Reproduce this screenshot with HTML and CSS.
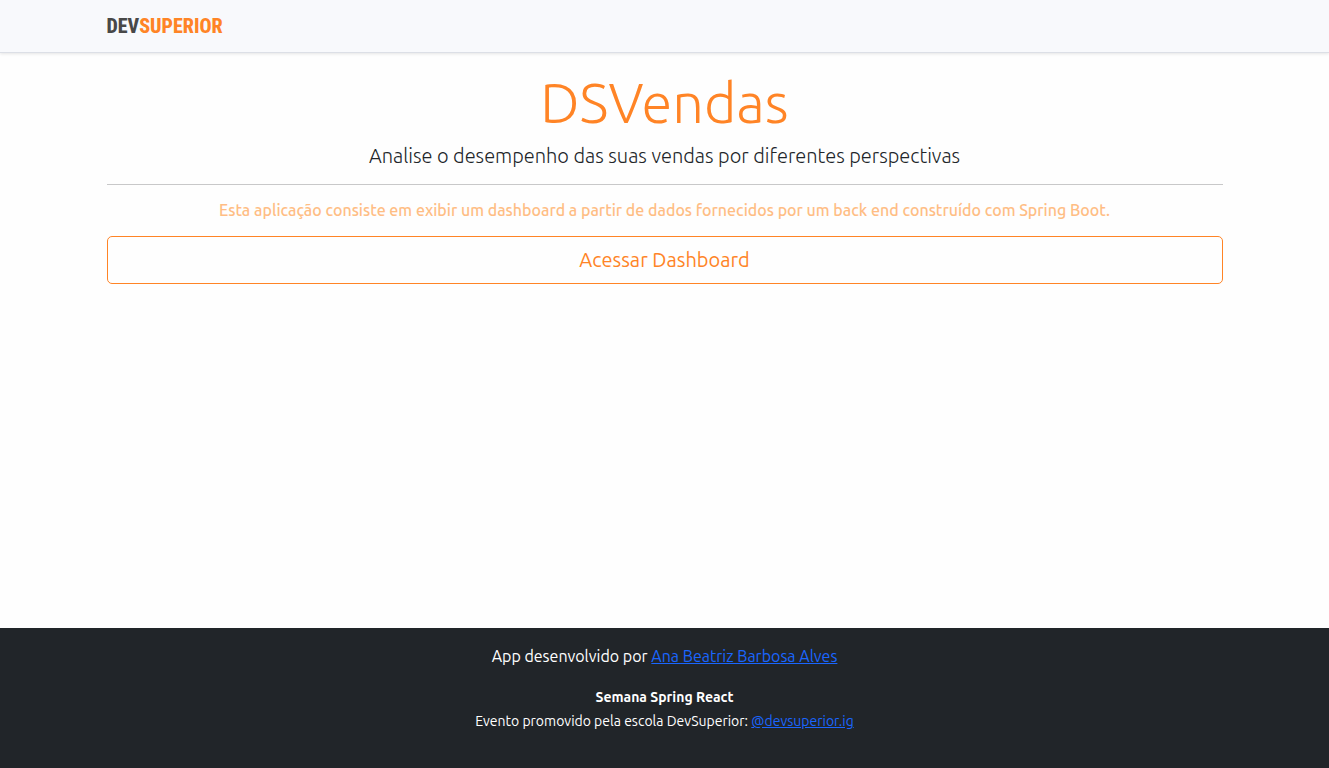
FILE: index.html
```html
<!DOCTYPE html>
<html lang="pt-BR">
<head>
  <meta charset="utf-8">
  <meta name="viewport" content="width=device-width, initial-scale=1">
  <title>DSVendas</title>
  <link rel="stylesheet" href="styles.css">
</head>
<body>
  <header class="navbar">
    <nav class="container">
      <span class="logo">DEV<span class="logo-accent">SUPERIOR</span></span>
    </nav>
  </header>
  <main class="container hero">
    <h1 class="title">DSVendas</h1>
    <p class="lead">Analise o desempenho das suas vendas por diferentes perspectivas</p>
    <hr class="divider">
    <p class="description">Esta aplicação consiste em exibir um dashboard a partir de dados fornecidos por um back end construído com Spring Boot.</p>
    <a class="button" href="#dashboard">Acessar Dashboard</a>
  </main>
  <footer class="footer">
    <p class="author">App desenvolvido por <a class="link" href="#autora">Ana Beatriz Barbosa Alves</a></p>
    <p class="event"><strong>Semana Spring React</strong></p>
    <p class="event">Evento promovido pela escola DevSuperior: <a class="link" href="#devsuperior">@devsuperior.ig</a></p>
  </footer>
</body>
</html>
```

FILE: styles.css
```css
* {
  box-sizing: border-box;
}

body {
  display: flex;
  flex-direction: column;
  min-height: 100vh;
  margin: 0;
  background: #fefefe;
  color: #212529;
  font-family: Ubuntu, "Noto Sans", "Open Sans", sans-serif;
  font-size: 16px;
  line-height: 24px;
}

.container {
  width: 100%;
  max-width: 1140px;
  margin: 0 auto;
  padding: 0 12px;
}

.navbar {
  padding: 14px 0;
  background: #f8f9fc;
  border-bottom: 1px solid #dcdfe6;
  box-shadow: 0 1px 3px rgba(0, 0, 0, 0.1);
}

.logo {
  display: block;
  color: #484848;
  font-family: "Roboto Condensed", Roboto, sans-serif;
  font-size: 20px;
  font-weight: 800;
}

.logo-accent {
  color: #ff8426;
}

.hero {
  flex: 1;
  padding-top: 16px;
  text-align: center;
}

.title {
  margin: 0;
  color: #ff8426;
  font-size: 56px;
  font-weight: 300;
  line-height: 68px;
}

.lead {
  margin: 3px 0 12px;
  font-size: 20px;
  font-weight: 300;
  line-height: 32px;
}

.divider {
  margin: 0 0 13px;
  border: 0;
  border-top: 1px solid #c8c8c9;
}

.description {
  margin: 0 0 14px;
  color: #ffbd84;
  font-weight: 500;
}

.button {
  display: block;
  padding: 7px 16px;
  border: 1px solid #ff8426;
  border-radius: 5px;
  color: #ff8426;
  font-size: 20px;
  line-height: 32px;
  text-decoration: none;
}

.footer {
  padding: 16px 16px 35px;
  background: #212529;
  color: #fff;
  text-align: center;
}

.author {
  margin: 0 0 17px;
}

.event {
  margin: 0;
  font-size: 14px;
}

.link {
  color: #1a66ff;
}
```
